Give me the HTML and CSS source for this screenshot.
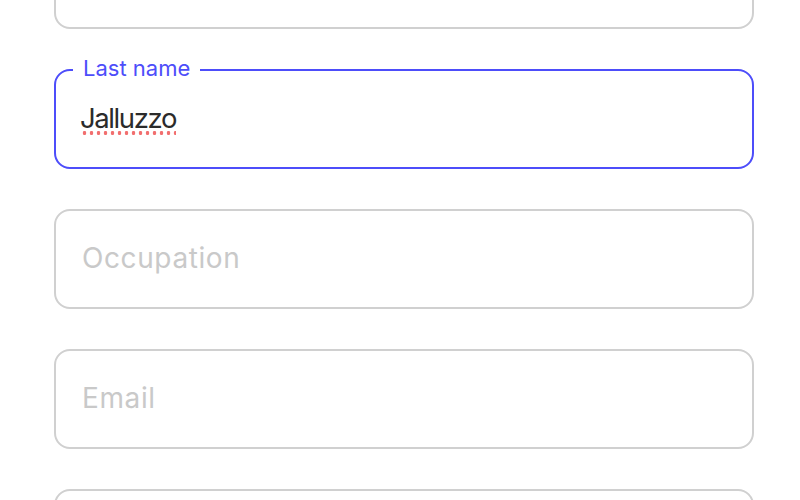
FILE: index.html
```html
<!DOCTYPE html>
<html lang="en">
<head>
<meta charset="utf-8">
<title>Form</title>
<link rel="stylesheet" href="styles.css">
</head>
<body>
<form class="form">
  <div class="field"></div>
  <div class="field focused">
    <label class="float-label">Last name</label>
    <span class="value">Jalluzzo</span>
  </div>
  <div class="field"><span class="placeholder">Occupation</span></div>
  <div class="field"><span class="placeholder">Email</span></div>
  <div class="field"></div>
</form>
</body>
</html>
```
FILE: styles.css
```css
html, body {
  margin: 0;
  height: 500px;
  overflow: hidden;
  background: #ffffff;
}
body {
  font-family: Inter, "Noto Sans", sans-serif;
}
.form {
  display: flex;
  flex-direction: column;
  gap: 40px;
  width: 700px;
  margin: -71px 0 0 54px;
}
.field {
  position: relative;
  box-sizing: border-box;
  height: 100px;
  border: 2px solid #d0d0d0;
  border-radius: 16px;
  display: flex;
  align-items: center;
  padding: 0 26px 3px;
  font-size: 28px;
}
.field.focused {
  border-color: #4d4dfa;
}
.placeholder {
  color: #c9c9c9;
  letter-spacing: 0.6px;
}
.value {
  color: #2b2b2b;
  font-size: 27.5px;
  letter-spacing: -1.4px;
  margin-left: -2px;
  background: radial-gradient(circle, rgba(240, 95, 95, 0.9) 1.7px, transparent 2.1px) repeat-x 1px bottom / 7px 4px;
}
.float-label {
  position: absolute;
  top: -15px;
  left: 17px;
  padding: 0 10px;
  background: #ffffff;
  color: #4d4dfa;
  font-size: 22px;
  line-height: 25px;
}
```
